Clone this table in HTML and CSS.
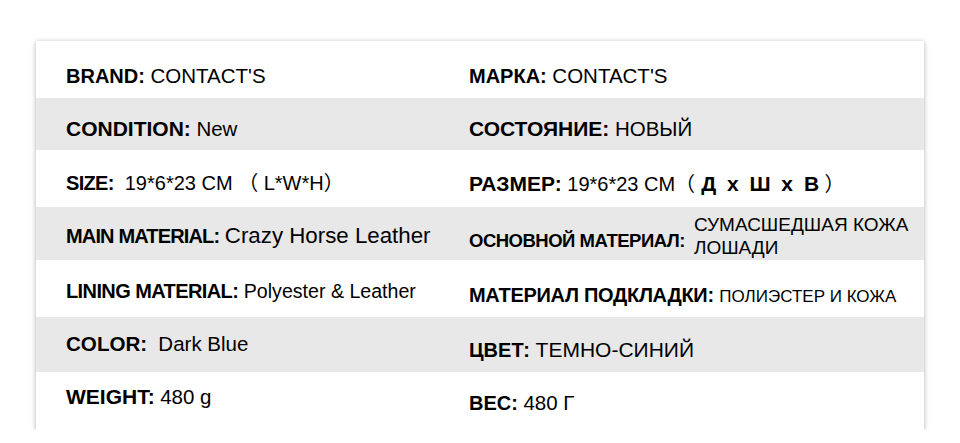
FILE: index.html
```html
<!DOCTYPE html>
<html lang="en">
<head>
<meta charset="utf-8">
<title>Specifications</title>
<link rel="stylesheet" href="styles.css">
</head>
<body>
<div class="card">
  <div class="row">
    <div class="cell en"><b class="lbl">BRAND:</b> <span class="val">CONTACT'S</span></div>
    <div class="cell ru"><b class="lbl">МАРКА:</b> <span class="val">CONTACT'S</span></div>
  </div>
  <div class="row">
    <div class="cell en"><b class="lbl">CONDITION:</b> <span class="val">New</span></div>
    <div class="cell ru"><b class="lbl">СОСТОЯНИЕ:</b> <span class="val">НОВЫЙ</span></div>
  </div>
  <div class="row">
    <div class="cell en"><b class="lbl">SIZE:</b>&nbsp; <span class="val">19*6*23 CM （ L*W*H）</span></div>
    <div class="cell ru"><b class="lbl">РАЗМЕР:</b> <span class="val">19*6*23 CM（<b class="dims">Д x Ш x В</b> ）</span></div>
  </div>
  <div class="row">
    <div class="cell en"><b class="lbl">MAIN MATERIAL:</b> <span class="val">Crazy Horse Leather</span></div>
    <div class="cell ru stack"><b class="lbl">ОСНОВНОЙ МАТЕРИАЛ:</b><span class="val">СУМАСШЕДШАЯ КОЖА<br>ЛОШАДИ</span></div>
  </div>
  <div class="row">
    <div class="cell en"><b class="lbl">LINING MATERIAL:</b> <span class="val">Polyester &amp; Leather</span></div>
    <div class="cell ru"><b class="lbl">МАТЕРИАЛ ПОДКЛАДКИ:</b> <span class="val">ПОЛИЭСТЕР И КОЖА</span></div>
  </div>
  <div class="row">
    <div class="cell en"><b class="lbl">COLOR:</b>&nbsp; <span class="val">Dark Blue</span></div>
    <div class="cell ru"><b class="lbl">ЦВЕТ:</b> <span class="val">ТЕМНО-СИНИЙ</span></div>
  </div>
  <div class="row">
    <div class="cell en"><b class="lbl">WEIGHT:</b> <span class="val">480 g</span></div>
    <div class="cell ru"><b class="lbl">ВЕС:</b> <span class="val">480 Г</span></div>
  </div>
</div>
</body>
</html>
```

FILE: styles.css
```css
html, body {
  margin: 0;
  padding: 0;
  background: #ffffff;
}

body {
  font-family: "Liberation Sans", Arial, "Noto Sans CJK SC", sans-serif;
  color: #000;
}

.card {
  margin: 41px 0 0 36px;
  width: 888px;
  background: #fff;
  box-shadow: 0 1px 5px rgba(0, 0, 0, 0.32);
}

.row {
  display: grid;
  grid-template-columns: 433px 1fr;
  box-sizing: border-box;
}

.row:nth-child(even) {
  background: #e8e8e8;
}

.cell {
  font-size: 20px;
  line-height: 24px;
  white-space: nowrap;
  box-sizing: border-box;
}

.en {
  padding-left: 30px;
}

.lbl {
  font-weight: 700;
}

.val {
  font-weight: 400;
  font-size: 20.5px;
}

/* row 1 */
.row:nth-child(1) { height: 57px; }
.row:nth-child(1) .cell { padding-top: 23px; }

/* row 2 */
.row:nth-child(2) { height: 52px; }
.row:nth-child(2) .cell { padding-top: 19px; }
.row:nth-child(2) .lbl { font-size: 21px; }

/* row 3 */
.row:nth-child(3) { height: 57px; }
.row:nth-child(3) .en { padding-top: 21px; }
.row:nth-child(3) .ru { padding-top: 22px; }
.row:nth-child(3) .en .lbl { letter-spacing: -0.7px; }
.row:nth-child(3) .ru .lbl { font-size: 21px; }
.row:nth-child(3) .val { font-size: 20px; }
.dims {
  font-size: 21px;
  word-spacing: 5px;
  margin-left: 6px;
}

/* row 4 */
.row:nth-child(4) { height: 53px; }
.row:nth-child(4) .en { padding-top: 17px; }
.row:nth-child(4) .en .lbl { letter-spacing: -0.85px; }
.row:nth-child(4) .en .val { font-size: 22.3px; }
.stack {
  display: flex;
  align-items: flex-start;
}
.row:nth-child(4) .stack { padding-top: 6px; }
.stack .lbl {
  font-size: 18.5px;
  line-height: 23px;
  letter-spacing: -0.5px;
  margin-top: 16px;
}
.stack .val {
  font-size: 19px;
  line-height: 23px;
  margin-left: 9px;
}

/* row 5 */
.row:nth-child(5) { height: 57px; }
.row:nth-child(5) .en { padding-top: 19px; }
.row:nth-child(5) .ru { padding-top: 23px; }
.row:nth-child(5) .en .lbl { letter-spacing: -0.6px; }
.row:nth-child(5) .en .val { font-size: 19.6px; }
.row:nth-child(5) .ru .lbl { letter-spacing: -0.3px; }
.row:nth-child(5) .ru .val { font-size: 17px; }

/* row 6 */
.row:nth-child(6) { height: 55px; }
.row:nth-child(6) .en { padding-top: 15px; }
.row:nth-child(6) .ru { padding-top: 21px; }
.row:nth-child(6) .en .lbl { font-size: 20.6px; }
.row:nth-child(6) .ru .val { font-size: 21px; }

/* row 7 */
.row:nth-child(7) { height: 58px; }
.row:nth-child(7) .en { padding-top: 13px; }
.row:nth-child(7) .ru { padding-top: 19px; }
.row:nth-child(7) .en .lbl { font-size: 21px; }
```
